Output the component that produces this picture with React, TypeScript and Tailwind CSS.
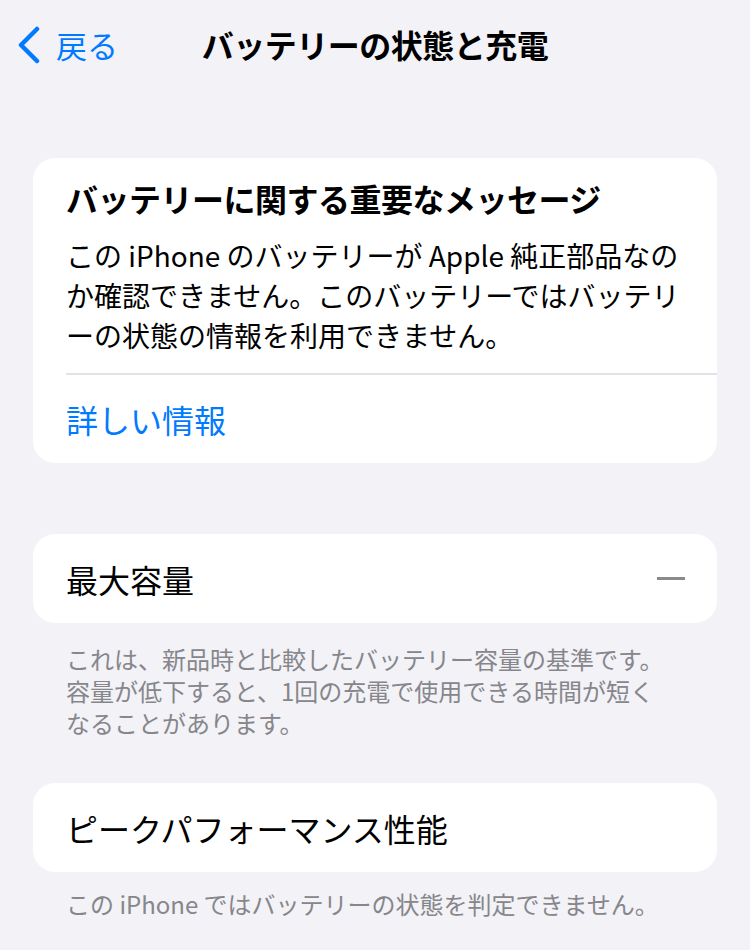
import React from "react";

const font = { fontFamily: '"Noto Sans CJK JP", "Noto Sans", sans-serif' };

function Chevron() {
  return (
    <svg width="26" height="38" viewBox="0 0 26 38" fill="none">
      <path d="M21 3 L5 19 L21 35" stroke="#007aff" strokeWidth="4.5" strokeLinecap="round" strokeLinejoin="round" />
    </svg>
  );
}

export default function App() {
  return (
    <div className="w-[750px] h-[950px] bg-[#f2f2f7] overflow-hidden text-black" style={font}>
      <div className="relative h-[88px] flex items-center justify-center">
        <button className="absolute left-[16px] top-[25px] flex items-center gap-[14px] text-[#007aff]">
          <Chevron />
          <span className="text-[31px] leading-[40px]">戻る</span>
        </button>
        <div className="text-[32px] font-bold leading-[40px] tracking-[-0.5px]">バッテリーの状態と充電</div>
      </div>

      <div className="px-[33px] pt-[70px]">
        <div className="bg-white rounded-[22px] overflow-hidden">
          <div className="pl-[33px] pr-[20px] pt-[20px] pb-[18px]">
            <div className="text-[32px] font-bold leading-[40px] tracking-[-0.5px]">バッテリーに関する重要なメッセージ</div>
            <p className="mt-[17px] text-[28px] leading-[40px] text-black whitespace-nowrap">
              この iPhone のバッテリーが Apple 純正部品なの
              <br />
              か確認できません。このバッテリーではバッテリ
              <br />
              ーの状態の情報を利用できません。
            </p>
          </div>
          <div className="ml-[33px] h-[2px] bg-[#e3e3e6]" />
          <div className="pl-[33px] h-[88px] flex items-center text-[32px] text-[#007aff]">詳しい情報</div>
        </div>

        <div className="mt-[71px] bg-white rounded-[22px] h-[89px] pl-[33px] pr-[32px] flex items-center justify-between">
          <span className="text-[32px]">最大容量</span>
          <span className="w-[28px] h-[3px] bg-[#8a8a8e]" />
        </div>
        <p className="pl-[33px] pr-[40px] pt-[20px] text-[24px] leading-[32px] text-[#86868b]">
          これは、新品時と比較したバッテリー容量の基準です。容量が低下すると、1回の充電で使用できる時間が短くなることがあります。
        </p>

        <div className="mt-[44px] bg-white rounded-[22px] h-[89px] pl-[33px] pr-[32px] flex items-center">
          <span className="text-[32px]">ピークパフォーマンス性能</span>
        </div>
        <p className="pl-[33px] pr-[40px] pt-[16px] text-[24px] leading-[31px] text-[#86868b]">
          この iPhone ではバッテリーの状態を判定できません。
        </p>
      </div>
    </div>
  );
}
